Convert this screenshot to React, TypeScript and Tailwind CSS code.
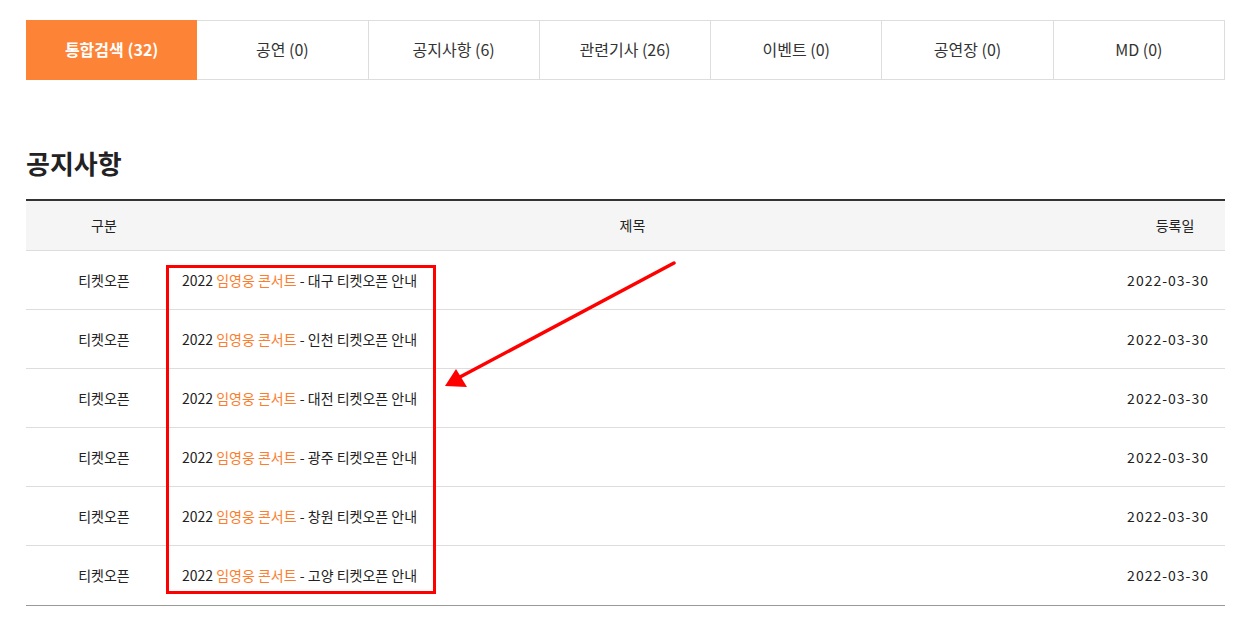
import React from "react"

const tabs = [
  "통합검색 (32)",
  "공연 (0)",
  "공지사항 (6)",
  "관련기사 (26)",
  "이벤트 (0)",
  "공연장 (0)",
  "MD (0)"
]

const notices = ["대구", "인천", "대전", "광주", "창원", "고양"]

export default function App() {
  return (
    <div
      className="relative min-h-[644px] bg-white px-[26px] pt-[20px] text-[#222]"
      style={{ fontFamily: '"Noto Sans CJK KR", "Noto Sans", sans-serif' }}>
      {/* Tabs */}
      <div className="grid h-[60px] w-[1199px] grid-cols-7">
        {tabs.map((t, i) => (
          <div
            key={t}
            className={
              i === 0
                ? "flex items-center justify-center bg-[#fd8436] pb-[3px] text-[16px] font-bold text-white"
                : "flex items-center justify-center border-y border-r border-[#dddddd] pb-[3px] text-[16px] text-[#333]"
            }>
            {t}
          </div>
        ))}
      </div>

      <h2 className="mt-[66px] text-[26px] leading-[34px] font-bold text-[#222]">
        공지사항
      </h2>

      {/* Notice table */}
      <div className="mt-[19px] w-[1199px] border-t-2 border-b border-t-[#333] border-b-[#999]">
        <div className="flex h-[50px] items-center border-b border-[#dddddd] bg-[#f5f5f5] text-[14px]">
          <div className="w-[156px] text-center">구분</div>
          <div className="flex-1 pr-[42px] text-center">제목</div>
          <div className="w-[100px] text-center">등록일</div>
        </div>
        {notices.map((city, i) => (
          <div
            key={city}
            className={`flex h-[59px] items-center text-[14px] ${
              i < notices.length - 1 ? "border-b border-[#dddddd]" : ""
            }`}>
            <div className="w-[156px] text-center">티켓오픈</div>
            <div className="flex-1">
              2022 <span className="text-[#fd7d2d]">임영웅 콘서트</span> - {city}{" "}
              티켓오픈 안내
            </div>
            <div className="w-[120px] pr-[16px] text-right tracking-[1px]">
              2022-03-30
            </div>
          </div>
        ))}
      </div>

      {/* Annotation overlay */}
      <div className="pointer-events-none absolute left-[166px] top-[265px] h-[329px] w-[270px] border-[3px] border-[#ff0000]" />
      <svg
        className="pointer-events-none absolute left-0 top-0"
        width="1246"
        height="644">
        <line
          x1="674"
          y1="263"
          x2="460"
          y2="377"
          stroke="#ff0000"
          strokeWidth="3.5"
          strokeLinecap="round"
        />
        <polygon points="445,386 456,369 467,387" fill="#ff0000" />
      </svg>
    </div>
  )
}
